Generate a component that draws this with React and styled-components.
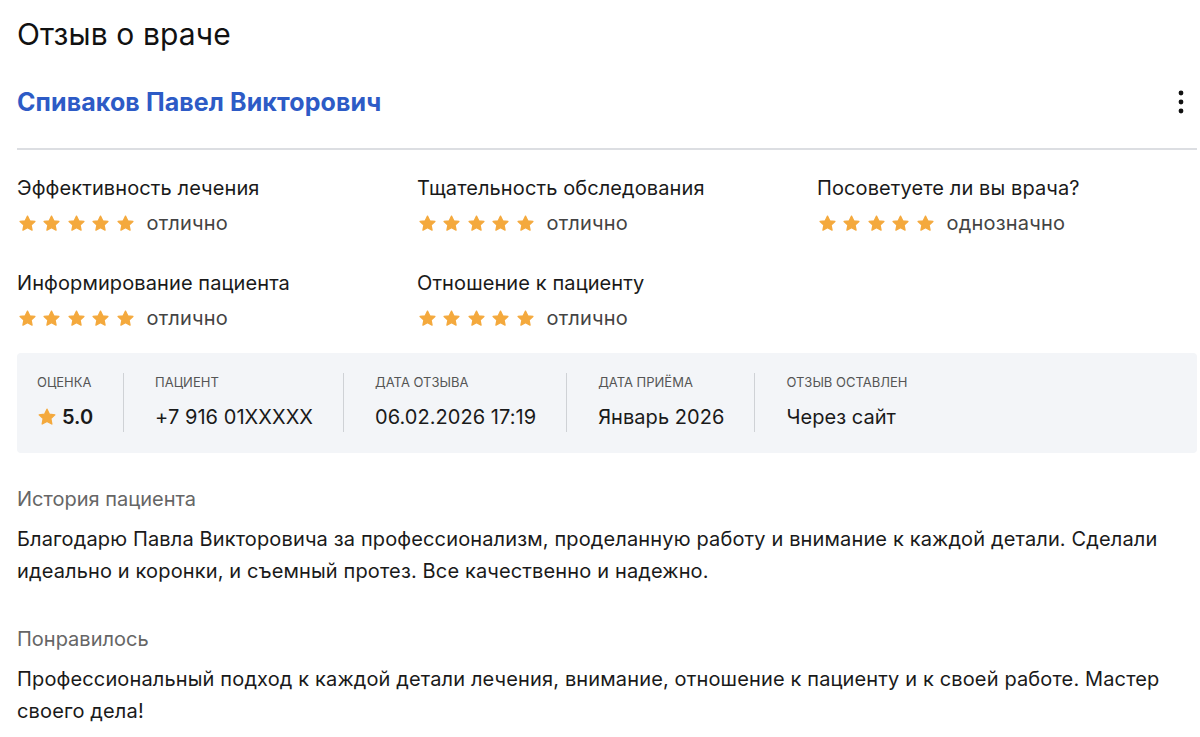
import { createGlobalStyle, styled } from "styled-components";

const GlobalStyle = createGlobalStyle`
  body {
    margin: 0;
    background: #fff;
    font-family: Inter, "Noto Sans", sans-serif;
    color: #1a1a1a;
  }
`;

const criteria = [
  { label: "Эффективность лечения", value: "отлично" },
  { label: "Тщательность обследования", value: "отлично" },
  { label: "Посоветуете ли вы врача?", value: "однозначно" },
  { label: "Информирование пациента", value: "отлично" },
  { label: "Отношение к пациенту", value: "отлично" },
];

const meta = [
  { label: "Пациент", value: "+7 916 01XXXXX" },
  { label: "Дата отзыва", value: "06.02.2026 17:19" },
  { label: "Дата приёма", value: "Январь 2026" },
  { label: "Отзыв оставлен", value: "Через сайт" },
];

const Star = ({ size = 19 }) => (
  <svg width={size} height={size} viewBox="0 0 24 24">
    <path
      d="M12 2.6l2.9 6 6.5.8-4.8 4.5 1.2 6.5L12 17.2l-5.8 3.2 1.2-6.5-4.8-4.5 6.5-.8z"
      fill="#f4a93d"
      stroke="#f4a93d"
      strokeWidth="1.6"
      strokeLinejoin="round"
    />
  </svg>
);

const App = () => {
  return (
    <Page>
      <GlobalStyle />
      <Title>Отзыв о враче</Title>
      <Header>
        <DoctorName>Спиваков Павел Викторович</DoctorName>
        <MoreButton aria-label="menu">
          <svg width="6" height="24" viewBox="0 0 6 24">
            <circle cx="3" cy="3" r="2.4" fill="#111" />
            <circle cx="3" cy="12" r="2.4" fill="#111" />
            <circle cx="3" cy="21" r="2.4" fill="#111" />
          </svg>
        </MoreButton>
      </Header>
      <Criteria>
        {criteria.map((c) => (
          <Criterion key={c.label}>
            <CriterionLabel>{c.label}</CriterionLabel>
            <StarsRow>
              <Stars>
                {[0, 1, 2, 3, 4].map((i) => (
                  <Star key={i} />
                ))}
              </Stars>
              <Verdict>{c.value}</Verdict>
            </StarsRow>
          </Criterion>
        ))}
      </Criteria>
      <InfoBox>
        <InfoItem>
          <InfoLabel>Оценка</InfoLabel>
          <Score>
            <Star size={20} />
            5.0
          </Score>
        </InfoItem>
        {meta.map((m) => (
          <InfoItem key={m.label} divided>
            <InfoLabel>{m.label}</InfoLabel>
            <InfoValue>{m.value}</InfoValue>
          </InfoItem>
        ))}
      </InfoBox>
      <Section>
        <SectionTitle>История пациента</SectionTitle>
        <SectionText>
          Благодарю Павла Викторовича за профессионализм, проделанную работу и
          внимание к каждой детали. Сделали идеально и коронки, и съемный
          протез. Все качественно и надежно.
        </SectionText>
      </Section>
      <Section>
        <SectionTitle>Понравилось</SectionTitle>
        <SectionText>
          Профессиональный подход к каждой детали лечения, внимание, отношение
          к пациенту и к своей работе. Мастер своего дела!
        </SectionText>
      </Section>
    </Page>
  );
};

const Page = styled.main`
  width: 1180px;
  padding: 14px 0 0 17px;
`;

const Title = styled.h1`
  margin: 0;
  font-size: 30px;
  font-weight: 400;
  line-height: 40px;
  letter-spacing: 0.1px;
  color: #111;
`;

const Header = styled.div`
  display: flex;
  align-items: center;
  justify-content: space-between;
  height: 56px;
  margin-top: 20px;
  border-bottom: 2px solid #dcdee2;
  padding-bottom: 18px;
`;

const DoctorName = styled.a`
  font-size: 25px;
  font-weight: 700;
  letter-spacing: 0.1px;
  color: #2d5bc6;
  text-decoration: none;
`;

const MoreButton = styled.button`
  display: flex;
  align-items: center;
  justify-content: center;
  width: 24px;
  height: 32px;
  margin-right: 4px;
  padding: 0;
  border: 0;
  background: none;
`;

const Criteria = styled.div`
  display: grid;
  grid-template-columns: repeat(3, 400px);
  row-gap: 35px;
  margin-top: 26px;
`;

const Criterion = styled.div`
  display: flex;
  flex-direction: column;
  gap: 10px;
`;

const CriterionLabel = styled.div`
  font-size: 20px;
  line-height: 24px;
  letter-spacing: 0.1px;
  color: #1a1a1a;
`;

const StarsRow = styled.div`
  display: flex;
  align-items: center;
  gap: 12px;
  height: 26px;
`;

const Stars = styled.div`
  display: flex;
  gap: 5.4px;
  padding-left: 1px;
`;

const Verdict = styled.span`
  font-size: 20px;
  letter-spacing: 0.2px;
  color: #444;
`;

const InfoBox = styled.div`
  display: flex;
  align-items: stretch;
  margin-top: 22px;
  padding: 20px 20px 21px;
  background: #f3f5f8;
  border-radius: 4px;
`;

const InfoItem = styled.div`
  display: flex;
  flex-direction: column;
  gap: 11px;
  padding: 0 30px 0 31px;
  border-left: ${(p) => (p.divided ? "1px solid #cfd2d6" : "none")};
  &:first-child {
    padding-left: 0;
  }
`;

const InfoLabel = styled.div`
  font-size: 13px;
  line-height: 18px;
  text-transform: uppercase;
  color: #555;
`;

const InfoValue = styled.div`
  font-size: 20px;
  line-height: 30px;
  letter-spacing: 0.05px;
  color: #1a1a1a;
`;

const Score = styled(InfoValue)`
  display: flex;
  align-items: center;
  gap: 5px;
  font-weight: 600;
  letter-spacing: 0;
`;

const Section = styled.section`
  margin-top: 34px;
  & + & {
    margin-top: 40px;
  }
`;

const SectionTitle = styled.h3`
  margin: 0;
  font-size: 20px;
  font-weight: 400;
  line-height: 24px;
  color: #666;
`;

const SectionText = styled.p`
  margin: 12px 0 0;
  font-size: 20px;
  line-height: 32px;
  letter-spacing: 0.14px;
  color: #1a1a1a;
`;

export default App;
